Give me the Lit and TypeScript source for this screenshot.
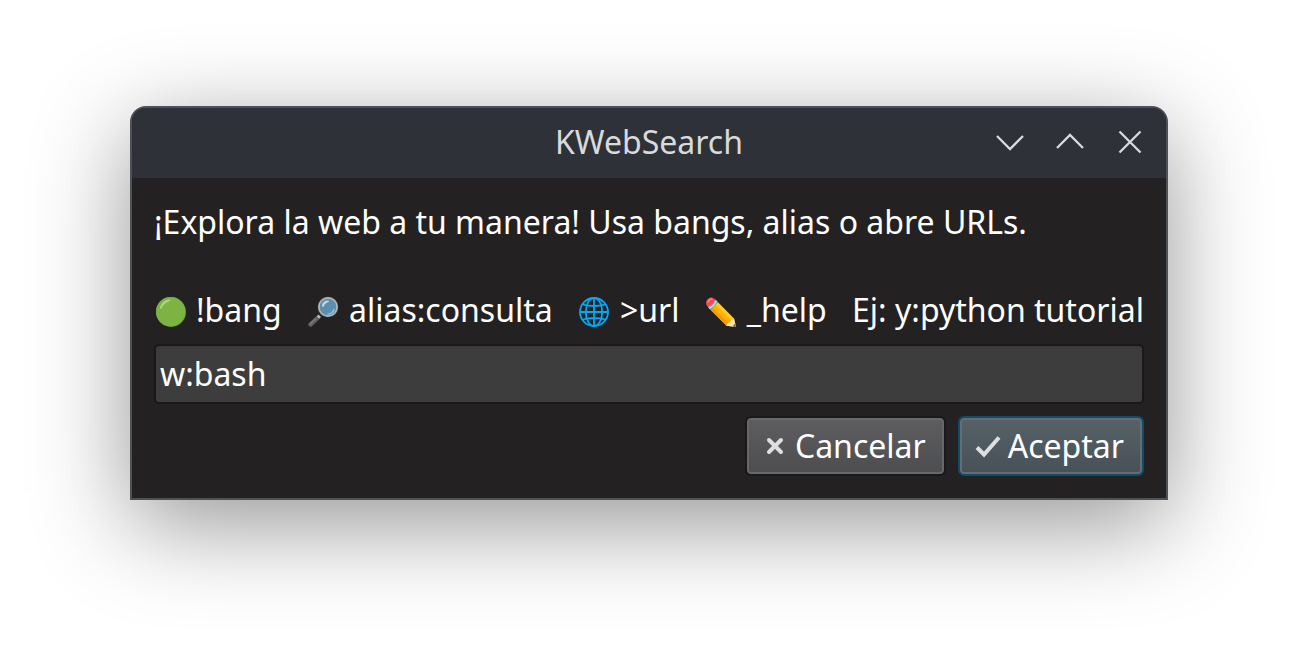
import { LitElement, html, css, svg } from "lit";
import { customElement, state } from "lit/decorators.js";

const circleIcon = html`<svg class="emoji" viewBox="0 0 32 32" aria-hidden="true">
  <circle cx="17" cy="16" r="15" fill="#689f38" />
  <circle cx="16.600" cy="15.600" r="14.600" fill="#7cb342" />
  <path d="M6 12C7 7 11 4 15 3.600c1.600-.2 2 1 .4 1.600C11.500 6.500 9 9 7.600 12.200 7 13.600 5.800 13.200 6 12z" fill="#aed581" />
</svg>`;

const lensIcon = html`<svg class="emoji" viewBox="0 0 32 32" aria-hidden="true">
  <path d="M11.500 18.500l2.500 2.500-2 2-2.500-2.500z" fill="#b0bec5" />
  <path d="M9.300 20.200l3 3-7.600 7.300c-1.400 1.200-4.400-1.300-3.200-3z" fill="#616161" />
  <path d="M8.500 21.500l1.300 1.200-6.200 6.200-1.400-1.200z" fill="#757575" />
  <circle cx="21" cy="11" r="9.200" fill="#5c8fae" stroke="#90989c" stroke-width="2" />
  <circle cx="21" cy="11" r="9" fill="none" stroke="#c3c9cc" stroke-width=".8" />
  <path d="M15 9.500c.6-3.200 3-5 6-5 1.600 0 1.400 1 .2 1.500-2.200.9-3.600 2.200-4.400 4.200-.6 1.300-2 .6-1.800-.7z" fill="#b9dcec" />
  <path d="M20.500 18c3 .2 6-2 6.800-5" fill="none" stroke="#8fc4de" stroke-width="1.400" />
</svg>`;

const globeIcon = html`<svg class="emoji" viewBox="0 0 32 32" aria-hidden="true">
  <g fill="none" stroke="#03a9f4" stroke-width="1.800">
    <circle cx="16" cy="16" r="14" />
    <ellipse cx="16" cy="16" rx="8.200" ry="14" />
    <path d="M16 2v28M2 16h28M4.500 8.500q11.500 3 23 0M4.500 23.500q11.500-3 23 0" />
  </g>
</svg>`;

const pencilIcon = html`<svg class="emoji" viewBox="0 0 32 32" aria-hidden="true">
  <path d="M5.500 13.800L12.800 6 29 22.500 31 31l-9.500-1.200z" fill="#ffca28" />
  <path d="M5.500 13.800l2-2.200L24.200 27.200l-2.700 2.600z" fill="#f59a00" />
  <path d="M7.500 11.600l3-3.200L26.800 25l-2.600 2.200z" fill="#ffb300" />
  <path d="M21.500 29.800l1.200-2.800 2.500-.4.600-2.400 2.300-.3.900-1.400L31 31z" fill="#ffe0b2" />
  <path d="M27.500 30.500l2.700-3.200.8 3.700z" fill="#546e7a" />
  <path d="M5.500 13.800C4.400 13 3.200 11.800 2.600 10.600L9.800 3.200C11.200 4 12.200 5 12.800 6z" fill="#82aec0" />
  <path d="M4 12.200c2.800-.6 6.600-4.400 7.200-7.600" stroke="#b9e4ea" stroke-width="1.400" fill="none" />
  <path d="M2.800 10.800C.4 8.200.6 5.600 2.400 3.400 4.400 1 7.200.6 9.900 3.200 9.600 6.400 6 10.200 2.800 10.800z" fill="#f44b50" />
  <path d="M2.800 6.500C3.300 4.400 5 3 7.200 2.800" stroke="#ff8a80" stroke-width="1.200" fill="none" />
</svg>`;

const HINTS = [
  { icon: circleIcon, text: "!bang" },
  { icon: lensIcon, text: "alias:consulta" },
  { icon: globeIcon, text: ">url" },
  { icon: pencilIcon, text: "_help" },
  { icon: null, text: "Ej: y:python tutorial" },
];

const CONTROLS = [
  { label: "Minimizar", shape: svg`<path d="M5 12l13 13 13-13" />` },
  { label: "Maximizar", shape: svg`<path d="M5 24l13-13 13 13" />` },
  { label: "Cerrar", shape: svg`<path d="M7.500 7.500l21 21M28.500 7.500l-21 21" />` },
];

@customElement("app-root")
export class AppRoot extends LitElement {
  @state() private query = "w:bash";

  static styles = css`
    :host {
      display: block;
      box-sizing: border-box;
      min-height: 100vh;
      padding: 106px 130px;
      background: #fff;
      overflow: hidden;
      font: 32px/44px "Noto Sans", sans-serif;
      color: #fff;
    }
    .window {
      border: 2px solid #4e5155;
      border-radius: 16px 16px 0 0;
      background: #232122;
      box-shadow: 0 24px 96px rgba(0, 0, 0, 0.42);
    }
    .titlebar {
      display: grid;
      grid-template-columns: 1fr auto 1fr;
      align-items: center;
      padding: 12px 18px 14px;
      border-radius: 14px 14px 0 0;
      background: #2e3138;
      color: #d9dadb;
    }
    .title {
      grid-column: 2;
      margin: 0;
      font: inherit;
    }
    .controls {
      display: flex;
      justify-content: flex-end;
      gap: 24px;
    }
    .control {
      width: 36px;
      height: 36px;
      padding: 0;
      border: 0;
      background: none;
      color: inherit;
    }
    .control svg {
      display: block;
      fill: none;
      stroke: currentColor;
      stroke-width: 2.3;
    }
    .body {
      display: flex;
      flex-direction: column;
      gap: 12px;
      padding: 22px;
    }
    .prompt {
      display: block;
    }
    .intro {
      display: block;
      margin-bottom: 44px;
    }
    .hints {
      display: flex;
      justify-content: space-between;
      white-space: nowrap;
    }
    .hint {
      display: flex;
      align-items: center;
      gap: 10px;
    }
    .emoji {
      width: 32px;
      height: 32px;
      margin-top: 4px;
    }
    .query {
      box-sizing: border-box;
      width: 100%;
      height: 60px;
      padding: 0 4px 2px;
      border: 2px solid #1a191a;
      border-radius: 5px;
      outline: none;
      background: linear-gradient(#383838, #3d3d3d 4px);
      color: inherit;
      font: inherit;
    }
    .actions {
      display: flex;
      justify-content: flex-end;
      gap: 12px;
    }
    .action {
      display: flex;
      align-items: center;
      gap: 4px;
      height: 60px;
      padding: 0 18px 0 12px;
      border: 2px solid #19181a;
      border-radius: 6px;
      background: linear-gradient(#5e5e60, #4d4d4f) padding-box;
      box-shadow: inset 0 0 0 2px #68686a;
      color: inherit;
      font: inherit;
    }
    .action.primary {
      border-color: #114c6c;
      background: linear-gradient(#566268, #485058) padding-box;
      box-shadow: inset 0 0 0 2px #646d72;
    }
    .action svg {
      width: 32px;
      height: 32px;
      fill: none;
      stroke: #dfdfdf;
      stroke-width: 4;
    }
  `;

  render() {
    return html`
      <main class="window">
        <header class="titlebar">
          <h1 class="title">KWebSearch</h1>
          <div class="controls">
            ${CONTROLS.map(
              (c) => html`<button class="control" type="button" aria-label=${c.label}>
                <svg width="36" height="36" viewBox="0 0 36 36">${c.shape}</svg>
              </button>`
            )}
          </div>
        </header>
        <form class="body" @submit=${(e: Event) => e.preventDefault()}>
          <label class="prompt" for="query">
            <span class="intro">¡Explora la web a tu manera! Usa bangs, alias o abre URLs.</span>
            <span class="hints">
              ${HINTS.map((h) => html`<span class="hint">${h.icon}<span>${h.text}</span></span>`)}
            </span>
          </label>
          <input
            id="query"
            class="query"
            type="text"
            .value=${this.query}
            @input=${(e: Event) => (this.query = (e.target as HTMLInputElement).value)}
          />
          <div class="actions">
            <button class="action" type="button">
              <svg viewBox="0 0 32 32" aria-hidden="true"><path d="M10 10l12 12M22 10l-12 12" stroke-linecap="round" /></svg>
              Cancelar
            </button>
            <button class="action primary" type="submit">
              <svg viewBox="0 0 32 32" aria-hidden="true"><path d="M5 17.500l7 7L27 7.500" /></svg>
              Aceptar
            </button>
          </div>
        </form>
      </main>
    `;
  }
}
